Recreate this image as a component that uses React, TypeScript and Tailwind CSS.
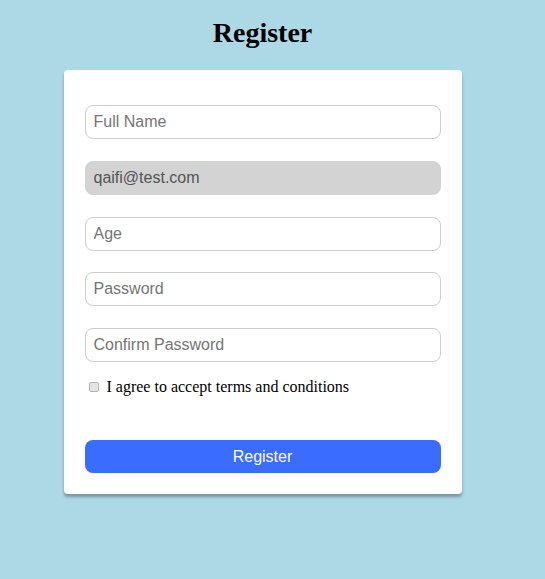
import React from "react";

export default function App() {
  const inputCls =
    "w-full h-[34px] rounded-lg border border-[#cccccc] bg-white px-2 text-[16px] text-[#333] placeholder:text-[#757575] outline-none";
  return (
    <div className="min-h-[579px] w-full bg-[#add8e6]" style={{ fontFamily: "'Liberation Sans', Arial, sans-serif" }}>
      <div className="w-[525px] flex flex-col items-center pt-[17px]">
        <h1
          className="text-[28px] font-bold leading-[32px] text-black"
          style={{ fontFamily: "'Liberation Serif', 'Times New Roman', serif" }}
        >
          Register
        </h1>
        <div className="mt-[21px] w-[398px] rounded-[4px] bg-white px-[21px] pt-[35px] pb-[21px] shadow-[0_3px_3px_rgba(0,0,0,0.3)]">
          <div className="flex flex-col gap-[21.75px]">
            <input className={inputCls} placeholder="Full Name" />
            <input
              className="w-full h-[34px] rounded-lg border border-[#d3d3d3] bg-[#d3d3d3] px-2 text-[16px] text-[#545454] outline-none"
              value="qaifi@test.com"
              readOnly
            />
            <input className={inputCls} placeholder="Age" />
            <input className={inputCls} type="password" placeholder="Password" />
            <input className={inputCls} type="password" placeholder="Confirm Password" />
          </div>
          <label
            className="mt-[13px] flex items-center text-[16px] text-black"
            style={{ fontFamily: "'Liberation Serif', 'Times New Roman', serif" }}
          >
            <input
              type="checkbox"
              className="ml-[4px] mr-[8px] h-[10px] w-[10px] appearance-none rounded-[2px] border border-[#b5b5b5] bg-[#e4e4e4]"
            />
            I agree to accept terms and conditions
          </label>
          <button className="mt-[41px] h-[33px] w-full rounded-lg bg-[#3a6cff] text-[16px] text-white">
            Register
          </button>
        </div>
      </div>
    </div>
  );
}
